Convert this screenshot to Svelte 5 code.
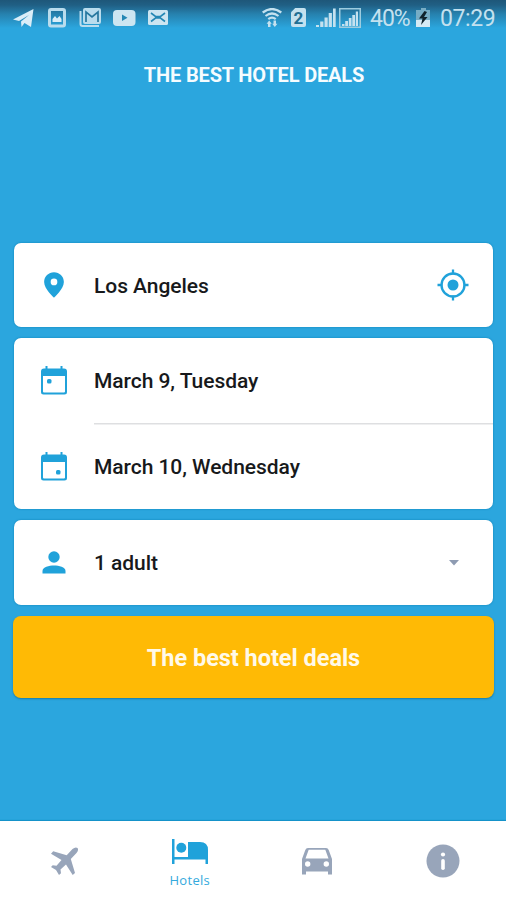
<script>
  const dates = [
    { label: 'March 9, Tuesday', dot: [6, 13] },
    { label: 'March 10, Wednesday', dot: [15, 18] }
  ];
</script>

<main>
  <div class="status">
    <div class="left">
      <svg width="22" height="20" viewBox="0 0 22 20"><path fill="#d9edf8" d="M0 11.500 20.500 1 18 19l-6.500-4L8.500 19 8 13.500 16 7 6 13Z"/></svg>
      <svg width="19" height="20" viewBox="0 0 19 20"><rect x="1.500" y="1.500" width="15" height="16.500" rx="1.500" fill="none" stroke="#b9dced" stroke-width="3"/><path fill="#d9edf8" d="M4.500 14v-3l2.500-3 2 2.500L11.500 8l2 3v3Z"/></svg>
      <svg width="24" height="20" viewBox="0 0 24 20"><path fill="none" stroke="#b9dced" stroke-width="2" d="M1.500 3v13q0 2 2 2H20"/><rect x="4" y="0" width="18" height="16" rx="2" fill="#b9dced"/><path fill="none" stroke="#26779e" stroke-width="1.700" d="M7 14V4l6 5 6-5v10"/></svg>
      <svg width="23" height="20" viewBox="0 0 23 20"><rect y="2" width="22.500" height="16" rx="4" fill="#cce5f1"/><path fill="#2387b4" d="m9 6.500 5.500 3.200L9 13Z"/></svg>
      <svg width="20" height="20" viewBox="0 0 20 20"><rect y="2" width="20" height="15" rx="1.500" fill="#cce5f1"/><path fill="none" stroke="#2387b4" stroke-width="1.600" d="M3 5 7.500 8.500h5L17 5M3 13.500 7.500 10h5l4.500 3.500"/></svg>
    </div>
    <div class="right">
      <svg class="wifi" width="20" height="20" viewBox="0 0 20 20"><g fill="none" stroke="#c4e1ef" stroke-width="2.200"><path d="M.7 4.500q9.300-7 18.600 0M3.500 8q6.500-5 13 0M6.300 11.200q3.700-3 7.400 0"/></g><path fill="#c4e1ef" d="m7.200 12.500 2.600 3.300H8.500V19H6v-3.200H4.600Zm5.600 6.500-2.600-3.300h1.300v-3.200H14v3.200h1.400Z"/></svg>
      <div class="sim"><span>2</span></div>
      <svg class="signal" width="20" height="20" viewBox="0 0 20 20"><path fill="#c4e1ef" d="M0 17h3v2H0Zm4.200-3.500h3.200V19H4.200Zm4.300-4h3.200V19H8.500Zm4.200-4.500h3.200v14h-3.200ZM17 .5h2.700V19H17Z"/></svg>
      <svg class="boxed" width="22" height="20" viewBox="0 0 22 20"><rect x=".75" y=".75" width="20.500" height="18.500" fill="none" stroke="#9dccdf" stroke-width="1.500"/><path fill="#c4e1ef" d="M3 16h2.500v2H3Zm3.200-3h2.800v5H6.200Zm3.600-3h2.700v8H9.800Zm3.500-3H16v11h-2.700Zm3.500-3.500H19V18h-2.200Z"/></svg>
      <span class="pct">40%</span>
      <svg class="battery" width="15" height="20" viewBox="0 0 15 20"><path fill="#77adc5" d="M5 0h5v2h4v11H0V2h5Z"/><path fill="#d6eaf4" d="M0 12h14v7H0Z"/><path fill="#10232c" d="M8.500 3 3 10.500h3.500L5 17l6.500-8H8l3-5Z"/></svg>
      <span class="time">07:29</span>
    </div>
  </div>

  <h1>THE BEST HOTEL DEALS</h1>

  <section class="form">
    <div class="card row">
      <svg class="lead" width="32" height="32" viewBox="0 0 24 24"><path fill="#20a2da" d="M12 2.500c-4.100 0-7.400 3.200-7.400 7.200C4.600 15 12 21.500 12 21.500s7.400-6.500 7.400-11.800c0-4-3.300-7.200-7.400-7.200Zm0 9.700a2.500 2.500 0 1 1 0-5 2.500 2.500 0 0 1 0 5Z"/></svg>
      <span class="label">Los Angeles</span>
      <svg class="target" width="32" height="32" viewBox="0 0 32 32"><circle cx="16" cy="16" r="11.500" fill="none" stroke="#20a2da" stroke-width="2.300"/><circle cx="16" cy="16" r="5.500" fill="#20a2da"/><path stroke="#20a2da" stroke-width="2.300" d="M16 .5v5M16 26.500v5M.5 16h5M26.500 16h5"/></svg>
    </div>

    <div class="card">
      {#each dates as date}
        <div class="row date">
          <svg class="lead" width="26" height="29" viewBox="0 0 26 29"><path fill="#20a2da" fill-rule="evenodd" d="M4.500 0h2v2.500h13V0h2v2.500H23q3 0 3 3V26q0 2.500-2.500 2.500h-21Q0 28.500 0 26V5.500q0-3 3-3h1.500ZM2 10v15.500q0 1 1 1h20q1 0 1-1V10Z"/><rect x={date.dot[0]} y={date.dot[1]} width="4.500" height="4.500" rx="1.500" fill="#20a2da"/></svg>
          <span class="label">{date.label}</span>
        </div>
      {/each}
    </div>

    <div class="card row guests">
      <svg class="lead" width="24" height="24" viewBox="0 0 24 24"><circle cx="12" cy="6" r="5.700" fill="#20a2da"/><path fill="#20a2da" d="M.5 22.500V20C.5 16 7 14.500 12 14.500S23.500 16 23.500 20v2.500Z"/></svg>
      <span class="label">1 adult</span>
      <svg class="arrow" width="10" height="6" viewBox="0 0 10 6"><path fill="#8e9bb2" d="M0 0h10L5 5.500Z"/></svg>
    </div>

    <button><span>The best hotel deals</span></button>
  </section>

  <nav>
    <div class="tab plane">
      <svg width="28" height="28" viewBox="0 0 28 28"><path fill="#98a5ba" d="M21.500 2q3-2.500 5-1 1.500 2-1 5L19.800 12 24 26l-2.300 2L15 17.500l-5.500 5 .5 3.700L8 28l-3-5-5-3 1.700-1.700 3.800.5L10.500 13 0 6.700 2.200 4.200l13.500 4Z"/></svg>
    </div>
    <div class="tab active">
      <svg width="38" height="26" viewBox="0 0 38 26"><path fill="#20a2da" d="M1 0h2.500v18H17V3h12q8 0 8 8v14h-2.500v-4.500h-31V25H1Z"/><circle cx="10.300" cy="8.700" r="5" fill="#20a2da"/></svg>
      <span>Hotels</span>
    </div>
    <div class="tab car">
      <svg width="30" height="28" viewBox="0 0 30 28"><path fill="#98a5ba" fill-rule="evenodd" d="M6 0h18q2 0 2.700 2L30 11v15.500h-4V23.500H4v3H0V11L3.300 2Q4 0 6 0Zm.7 1.700L3.500 10.500h23L23.300 1.700ZM5.700 13.300a2.700 2.700 0 1 0 0 5.400 2.700 2.700 0 0 0 0-5.400Zm18.600 0a2.700 2.700 0 1 0 0 5.400 2.700 2.700 0 0 0 0-5.400Z"/></svg>
    </div>
    <div class="tab">
      <svg width="34" height="34" viewBox="0 0 34 34"><circle cx="17" cy="17" r="16.500" fill="#98a5ba"/><circle cx="17" cy="10.500" r="2.100" fill="#fff"/><rect x="15.200" y="15" width="3.600" height="11" rx="1.800" fill="#fff"/></svg>
    </div>
  </nav>
</main>

<style>
  :global(body) { margin: 0; }
  main {
    box-sizing: border-box;
    width: 506px;
    height: 900px;
    display: flex;
    flex-direction: column;
    overflow: hidden;
    background: linear-gradient(#1e5779 0, #205f84 5px, #2681ae 14px, #2ba6de 28px, #2ba6de 100%);
    font-family: Roboto, sans-serif;
  }
  svg { display: block; flex: none; }
  .status {
    height: 36px;
    display: flex;
    justify-content: space-between;
    box-sizing: border-box;
    padding: 8px 11px 0 13px;
    color: #c4e1ef;
  }
  .left { display: flex; gap: 13px; }
  .left svg:nth-child(3) { margin-left: -1px; }
  .left svg:nth-child(4) { margin-left: -3px; }
  .left svg:nth-child(5) { margin-left: -1px; }
  .right { display: flex; font-size: 23px; line-height: 21px; }
  .sim {
    width: 15px;
    height: 19px;
    margin: 0 10px 0 9px;
    background: #c4e1ef;
    border-radius: 2px;
    clip-path: polygon(28% 0, 100% 0, 100% 100%, 0 100%, 0 22%);
    color: #216f94;
    font-size: 17px;
    font-weight: 700;
    line-height: 20px;
    text-align: center;
  }
  .boxed { margin: 0 9px 0 3px; }
  .battery { margin: 0 9px 0 5px; }
  .pct { width: 41px; letter-spacing: -1px; }
  .time { width: 55px; letter-spacing: -.4px; }
  h1 {
    margin: 27px 0 0 2px;
    height: 24px;
    line-height: 24px;
    text-align: center;
    font-size: 20px;
    font-weight: 700;
    letter-spacing: -.15px;
    color: #f5fcff;
  }
  .form { margin: 156px 13px 0 14px; display: flex; flex-direction: column; gap: 11px; }
  .card { background: #fff; border-radius: 7px; box-shadow: 0 0 2px #087db3; }
  .row {
    height: 84px;
    box-sizing: border-box;
    display: grid;
    grid-template-columns: 80px 1fr auto;
    align-items: center;
  }
  .lead { margin: 0 auto; }
  .label { padding-top: 1px; font-size: 21px; font-weight: 500; color: #17191b; letter-spacing: -.05px; }
  .target { margin-right: 24px; }
  .date { height: 85px; }
  .date + .date { height: 86px; background: linear-gradient(#dedfe1, #dedfe1) 80px 0 / 100% 1.500px no-repeat; }
  .date .label { padding-top: 0; }
  .date + .date .label { padding-top: 1px; }
  .guests { height: 85px; }
  .arrow { margin-right: 34px; }
  button {
    height: 82px;
    margin: 0 -1px;
    padding: 2px 0 0;
    border: 0;
    border-radius: 8px;
    background: #ffba05;
    box-shadow: 0 1px 2px #187ba6;
    color: #fff9e8;
    font: 700 23.500px Roboto, sans-serif;
    letter-spacing: -.03px;
  }
  nav {
    margin-top: auto;
    height: 79px;
    display: flex;
    background: #fff;
    box-shadow: 0 -1px 1px #1592c9;
  }
  .tab { flex: 1; display: flex; flex-direction: column; align-items: center; justify-content: center; }
  .plane { padding-left: 2px; margin-right: -2px; }
  .car { padding: 2px 0 0 1px; margin-right: -1px; }
  .active { padding-top: 6px; box-sizing: border-box; color: #35aadd; font: 13px "Open Sans", sans-serif; letter-spacing: .3px; gap: 6px; }
</style>
